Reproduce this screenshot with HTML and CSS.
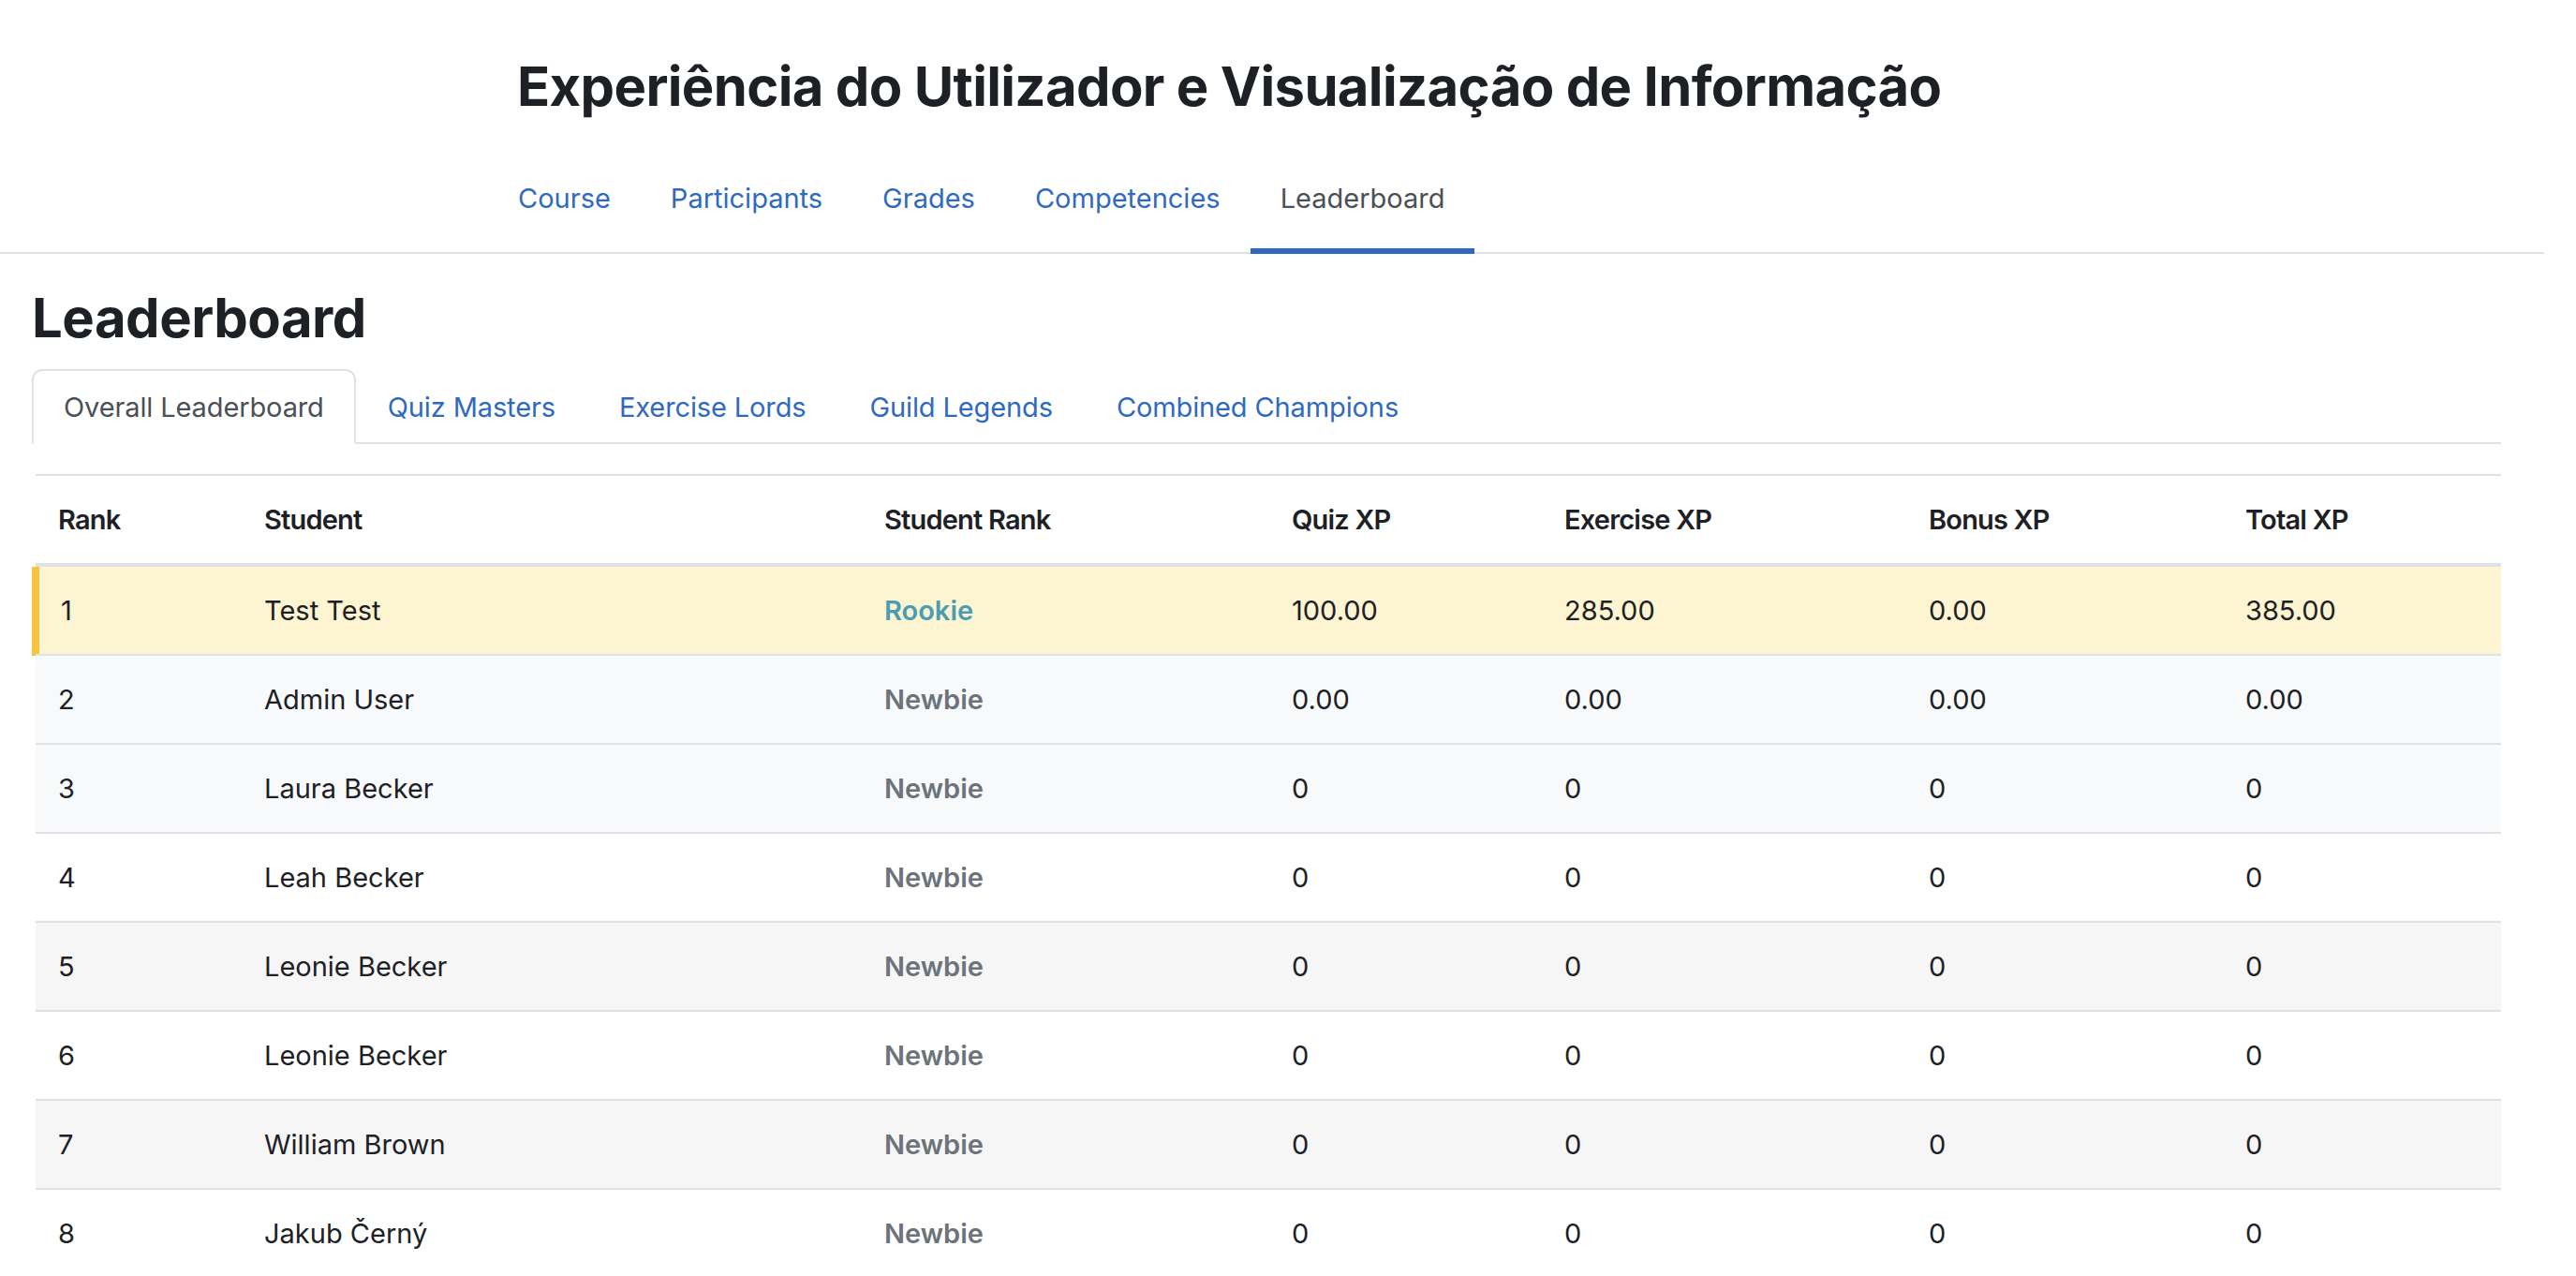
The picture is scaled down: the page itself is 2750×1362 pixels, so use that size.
FILE: index.html
```html
<!DOCTYPE html>
<html lang="pt">
<head>
<meta charset="utf-8">
<title>Leaderboard</title>
<link rel="stylesheet" href="styles.css">
</head>
<body>
<div class="page">
  <header class="course-header">
    <div class="header-inner">
      <h1 class="course-title">Experiência do Utilizador e Visualização de Informação</h1>
      <nav class="secondary-nav">
        <ul class="nav-list">
          <li><a class="nav-link" href="#">Course</a></li>
          <li><a class="nav-link" href="#">Participants</a></li>
          <li><a class="nav-link" href="#">Grades</a></li>
          <li><a class="nav-link" href="#">Competencies</a></li>
          <li><a class="nav-link is-active" href="#">Leaderboard</a></li>
        </ul>
      </nav>
    </div>
  </header>

  <main class="main">
    <h2 class="page-title">Leaderboard</h2>
    <ul class="tabs">
      <li><a class="tab is-active" href="#">Overall Leaderboard</a></li>
      <li><a class="tab" href="#">Quiz Masters</a></li>
      <li><a class="tab" href="#">Exercise Lords</a></li>
      <li><a class="tab" href="#">Guild Legends</a></li>
      <li><a class="tab" href="#">Combined Champions</a></li>
    </ul>

    <table class="board">
      <colgroup>
        <col class="c-rank"><col class="c-student"><col class="c-srank"><col class="c-quiz"><col class="c-ex"><col class="c-bonus"><col class="c-total">
      </colgroup>
      <thead>
        <tr>
          <th>Rank</th><th>Student</th><th>Student Rank</th><th>Quiz XP</th><th>Exercise XP</th><th>Bonus XP</th><th>Total XP</th>
        </tr>
      </thead>
      <tbody>
        <tr class="row-first">
          <td class="rank-cell">1</td><td>Test Test</td><td><span class="badge-rookie">Rookie</span></td><td>100.00</td><td>285.00</td><td>0.00</td><td>385.00</td>
        </tr>
        <tr class="row-tint">
          <td>2</td><td>Admin User</td><td><span class="badge-newbie">Newbie</span></td><td>0.00</td><td>0.00</td><td>0.00</td><td>0.00</td>
        </tr>
        <tr class="row-tint">
          <td>3</td><td>Laura Becker</td><td><span class="badge-newbie">Newbie</span></td><td>0</td><td>0</td><td>0</td><td>0</td>
        </tr>
        <tr>
          <td>4</td><td>Leah Becker</td><td><span class="badge-newbie">Newbie</span></td><td>0</td><td>0</td><td>0</td><td>0</td>
        </tr>
        <tr class="row-stripe">
          <td>5</td><td>Leonie Becker</td><td><span class="badge-newbie">Newbie</span></td><td>0</td><td>0</td><td>0</td><td>0</td>
        </tr>
        <tr>
          <td>6</td><td>Leonie Becker</td><td><span class="badge-newbie">Newbie</span></td><td>0</td><td>0</td><td>0</td><td>0</td>
        </tr>
        <tr class="row-stripe">
          <td>7</td><td>William Brown</td><td><span class="badge-newbie">Newbie</span></td><td>0</td><td>0</td><td>0</td><td>0</td>
        </tr>
        <tr>
          <td>8</td><td>Jakub Černý</td><td><span class="badge-newbie">Newbie</span></td><td>0</td><td>0</td><td>0</td><td>0</td>
        </tr>
      </tbody>
    </table>
  </main>
</div>
</body>
</html>
```
FILE: styles.css
```css
* { box-sizing: border-box; }

html, body {
  margin: 0;
  padding: 0;
  background: #ffffff;
}

body {
  font-family: Inter, "Noto Sans", "Liberation Sans", sans-serif;
  font-size: 29px;
  line-height: 45px;
  letter-spacing: 0;
  color: #1d2125;
  overflow: hidden;
}

a { text-decoration: none; }

ul { list-style: none; margin: 0; padding: 0; }

.page {
  width: 2716px;
}

/* ---------- course header ---------- */
.course-header {
  border-bottom: 2px solid #dee2e6;
  padding-top: 58px;
}

.header-inner {
  padding-left: 521px;
}

.course-title {
  margin: 0 0 46px 31px;
  font-size: 58px;
  line-height: 69.6px;
  font-weight: 700;
  letter-spacing: -0.65px;
  color: #1d2125;
}

.secondary-nav {
  margin-bottom: -2px;
}

.nav-list {
  display: flex;
}

.nav-link {
  display: block;
  padding: 16px 32px 32px;
  line-height: 43.5px;
  border-bottom: 6px solid transparent;
  color: #2f6abf;
}

.nav-link.is-active {
  color: #4a5057;
  border-bottom-color: #3068bd;
}

/* ---------- main ---------- */
.main {
  padding: 34px 46px 0 34px;
}

.page-title {
  margin: 0 0 19px 0;
  font-size: 58px;
  line-height: 69.6px;
  font-weight: 700;
  letter-spacing: -0.5px;
  color: #1d2125;
}

.tabs {
  display: flex;
  border-bottom: 2px solid #dee2e6;
  margin-bottom: 32px;
}

.tabs li {
  margin-bottom: -2px;
}

.tab {
  display: block;
  padding: 17px 32px 16px;
  line-height: 43.5px;
  letter-spacing: -0.12px;
  border: 2px solid transparent;
  border-radius: 11px 11px 0 0;
  color: #2f6abf;
}

.tab.is-active {
  color: #4a5057;
  border-color: #dee2e6 #dee2e6 #ffffff;
  background: #ffffff;
}

/* ---------- table ---------- */
.board {
  margin-left: 4px;
  width: calc(100% - 4px);
  border-collapse: separate;
  border-spacing: 0;
  table-layout: fixed;
}

.c-rank { width: 220px; }
.c-student { width: 662px; }
.c-srank { width: 435px; }
.c-quiz { width: 291px; }
.c-ex { width: 389px; }
.c-bonus { width: 338px; }
.c-total { width: 297px; }

.board th,
.board td {
  padding: 24px;
  text-align: left;
  vertical-align: top;
  line-height: 45px;
}

.board th {
  font-weight: 600;
  letter-spacing: -0.8px;
  color: #1d2125;
  border-top: 2px solid #dee2e6;
  border-bottom: 4px solid #dee2e6;
}

.board td {
  border-bottom: 2px solid #dee2e6;
}

.row-first td {
  background: #fdf4d1;
}

.row-first .rank-cell {
  padding-left: 27px;
  box-shadow: -4px 0 0 #f6c343, inset 4px 0 0 #f6c343;
}

.row-tint td {
  background: #f8f9fa;
}

.row-stripe td {
  background: #f6f6f6;
}

.badge-rookie {
  font-weight: 600;
  color: #4b9db1;
}

.badge-newbie {
  font-weight: 600;
  color: #6c737a;
}
```
